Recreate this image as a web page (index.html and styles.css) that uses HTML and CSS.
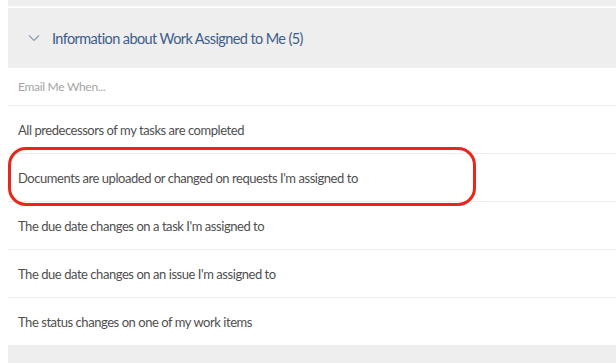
FILE: index.html
```html
<!DOCTYPE html>
<html lang="en">
<head>
  <meta charset="UTF-8">
  <title>Email Preferences</title>
  <link rel="stylesheet" href="styles.css">
</head>
<body>
  <div class="top-band"></div>
  <div class="section">
    <div class="section-header">
      <svg class="chevron" width="12" height="8" viewBox="0 0 12 8">
        <path d="M1 1.5 L6 6.5 L11 1.5" fill="none" stroke="#8a9bb3" stroke-width="1.1"/>
      </svg>
      <span>Information about Work Assigned to Me (5)</span>
    </div>
    <div class="list">
      <div class="row row-label">Email Me When...</div>
      <div class="row">All predecessors of my tasks are completed</div>
      <div class="row highlighted">Documents are uploaded or changed on requests I'm assigned to</div>
      <div class="row">The due date changes on a task I'm assigned to</div>
      <div class="row">The due date changes on an issue I'm assigned to</div>
      <div class="row">The status changes on one of my work items</div>
    </div>
  </div>
  <div class="bottom-band"></div>
</body>
</html>
```

FILE: styles.css
```css
body {
  margin: 0;
  padding: 0 0 0 8px;
  background: #fff;
  font-family: "Lato", "Open Sans", sans-serif;
  color: #4f4f4f;
  overflow: hidden;
}
.top-band {
  height: 6px;
  background: #eeeeee;
  border-bottom: 1px solid #fafafa;
  margin-bottom: 1px;
}
.section-header {
  height: 60px;
  background: #eeeeee;
  display: flex;
  align-items: center;
  padding-left: 20px;
  color: #3d5d8c;
  font-size: 14.5px;
  letter-spacing: -0.6px;
}
.chevron {
  margin-right: 12px;
}
.row {
  height: 47px;
  display: flex;
  align-items: center;
  padding-left: 10px;
  font-size: 13px;
  letter-spacing: -0.45px;
  border-bottom: 1px solid #ececec;
}
.row-label {
  height: 37px;
  color: #a5a5a5;
  font-size: 12px;
  letter-spacing: -0.3px;
}
.highlighted {
  position: relative;
}
.highlighted::after {
  content: "";
  position: absolute;
  left: 0;
  top: -7px;
  width: 462px;
  height: 53px;
  border: 3px solid #e8261a;
  border-radius: 18px;
}
.bottom-band {
  height: 20px;
  background: #eeeeee;
}
```
